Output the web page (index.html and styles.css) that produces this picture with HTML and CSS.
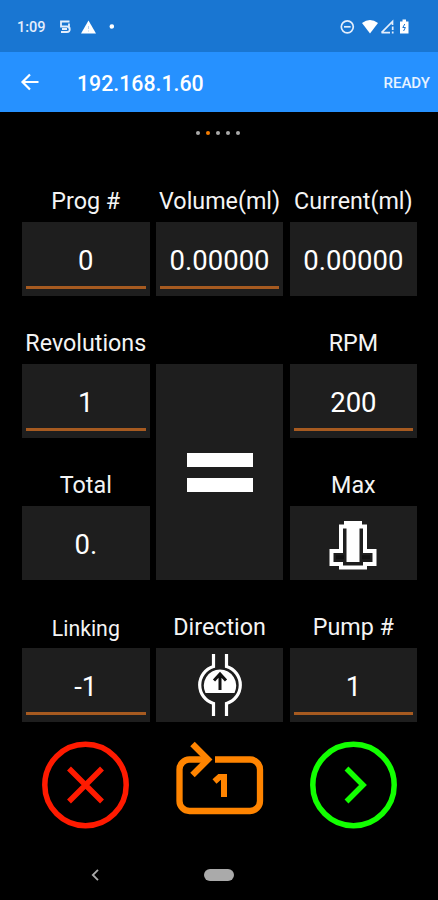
FILE: index.html
```html
<!DOCTYPE html>
<html lang="en">
<head>
  <meta charset="UTF-8" />
  <meta name="viewport" content="width=device-width, initial-scale=1.0"/>
  <title>Pump Control</title>
  <link rel="stylesheet" href="styles.css">
</head>
<body>
  <div class="status-bar">
    <span class="clock">1:09</span>
    <svg class="status-left" width="56" height="18" viewBox="0 0 56 18" fill="none" stroke="#e4eefc" stroke-width="1.8">
      <path d="M11.5 3.500H3V8.500H9a2.700 2.700 0 0 1 0 5.500H3M4 11h5M11 5.500v5"/>
      <path d="M30.500 2.500L38 15.500H23z" fill="#fff" stroke="none"/>
      <path d="M30.500 8v3M30.500 12.500v1" stroke="#b5d0ef" stroke-width="1"/>
      <circle cx="53.800" cy="8.500" r="2.300" fill="#fff" stroke="none"/>
    </svg>
    <svg class="status-right" width="72" height="18" viewBox="0 0 72 18" fill="none" stroke="#e4eefc" stroke-width="1.700">
      <circle cx="8.300" cy="8.800" r="6"/>
      <path d="M5 8.800h6.600"/>
      <path d="M23 5Q31 -1 39 5L31 15.500z" fill="#fff" stroke="none"/>
      <path d="M42.500 14.700L53.500 3.500v3.500M42.500 14.700h8.500M53.700 8.500v3.500M53.700 13.500v2"/>
      <path d="M61 3.500h2.500V1.500h3.500v2h2.500v12H61z" fill="#fff" stroke="none"/>
      <path d="M65.800 6l-2 3.500h2.600l-1.800 3.500" stroke="#1976d2" stroke-width="1"/>
    </svg>
  </div>

  <header>
    <svg width="20" height="18" viewBox="0 0 20 18" fill="none" stroke="#fff" stroke-width="2.200">
      <path d="M18.500 9H2.500M10 1.500L2.500 9l7.500 7.500"/>
    </svg>
    <h1>192.168.1.60</h1>
    <span class="ready">READY</span>
  </header>

  <div class="dots">
    <span></span><span class="active"></span><span></span><span></span><span></span>
  </div>

  <div class="panel">
    <div class="cell">
      <label>Prog #</label>
      <div class="tile input">0</div>
    </div>
    <div class="cell">
      <label>Volume(ml)</label>
      <div class="tile input">0.00000</div>
    </div>
    <div class="cell">
      <label>Current(ml)</label>
      <div class="tile">0.00000</div>
    </div>

    <div class="cell">
      <label>Revolutions</label>
      <div class="tile input">1</div>
    </div>
    <div class="cell equals">
      <div class="tile">
        <span class="bar"></span>
        <span class="bar"></span>
      </div>
    </div>
    <div class="cell">
      <label>RPM</label>
      <div class="tile input">200</div>
    </div>

    <div class="cell">
      <label>Total</label>
      <div class="tile">0.</div>
    </div>
    <div class="cell">
      <label>Max</label>
      <div class="tile">
        <!-- tubing size -->
        <svg width="50" height="52" viewBox="0 0 50 52">
          <path d="M13 8.500h5V5h14v3.500h5V33h9.500v13H37v3.500H13V46H3.500V33H13z" fill="none" stroke="#fff" stroke-width="4"/>
          <path d="M18.500 4h13v40h-13z" fill="#fff"/>
          <path d="M8 39.200h8M34 39.200h8" stroke="#111" stroke-width="4"/>
        </svg>
      </div>
    </div>

    <div class="cell">
      <label class="small">Linking</label>
      <div class="tile input">-1</div>
    </div>
    <div class="cell">
      <label>Direction</label>
      <div class="tile">
        <!-- pump head with flow arrow -->
        <svg width="44" height="64" viewBox="0 0 44 64" fill="none" stroke="#fff" stroke-width="3.200">
          <path d="M15.500 0v12.500A19.300 19.300 0 0 0 15.500 49.500v12.500M28.500 0v12.500A19.300 19.300 0 0 1 28.500 49.500v12.500"/>
          <path d="M7.500 39A16.200 16.200 0 1 1 36.500 39z" fill="#fff" stroke="none"/>
          <path d="M22 36V20.500M16 26.500l6-6.500 6 6.500" stroke="#111" stroke-width="3"/>
        </svg>
      </div>
    </div>
    <div class="cell">
      <label>Pump #</label>
      <div class="tile input">1</div>
    </div>
  </div>

  <div class="actions">
    <svg width="90" height="90" viewBox="0 0 90 90" fill="none" stroke="#ff1a00" stroke-width="5.500">
      <circle cx="45.500" cy="45" r="40.700"/>
      <path d="M29 28.500l33 33M62 28.500l-33 33"/>
    </svg>
    <svg width="90" height="90" viewBox="0 0 90 90" fill="none" stroke="#ff8400" stroke-width="6.300">
      <path d="M33 19.500H15.500A10 10 0 0 0 5.500 29.500V61A10 10 0 0 0 15.500 71H76A10 10 0 0 0 86 61V29.500A10 10 0 0 0 76 19.500H41"/>
      <path d="M18.500 4L34 19.500 18.500 35"/>
      <path d="M40.500 41.500L45.500 37H50v20" stroke-width="6"/>
    </svg>
    <svg width="90" height="90" viewBox="0 0 90 90" fill="none" stroke="#12ff00" stroke-width="5.500">
      <circle cx="45.500" cy="45" r="40.700"/>
      <path d="M38.500 28.500L55 45 38.500 61.500"/>
    </svg>
  </div>

  <div class="nav-bar">
    <svg width="8" height="12" viewBox="0 0 8 12" fill="none" stroke="#aaa" stroke-width="1.800">
      <path d="M7 .8L1.800 6 7 11.200"/>
    </svg>
    <span class="home"></span>
    <span></span>
  </div>
</body>
</html>
```

FILE: styles.css
```css
* {
  box-sizing: border-box;
}
body {
  background-color: #000;
  color: #fff;
  font-family: Roboto, Arial, sans-serif;
  margin: 0;
  height: 900px;
  overflow: hidden;
}
.status-bar {
  display: flex;
  align-items: center;
  height: 52px;
  padding: 2px 27px 0 17px;
  background-color: #1976d2;
}
.clock {
  width: 38px;
  font-size: 14.5px;
  font-weight: 500;
  color: #e4eefc;
}
.status-left {
  margin-left: 3px;
}
.status-right {
  margin-left: auto;
}
header {
  display: flex;
  align-items: center;
  height: 60px;
  padding: 0 8px 0 20px;
  background-color: #2691ff;
}
h1 {
  margin: 2px 0 0 37px;
  font-size: 21.3px;
  font-weight: 500;
}
.ready {
  margin-left: auto;
  margin-top: 1px;
  font-size: 15px;
  font-weight: 500;
  color: #e8f3ff;
}
.dots {
  display: flex;
  justify-content: center;
  gap: 6px;
  height: 42px;
  padding: 19px 2px 0 0;
}
.dots span {
  width: 4px;
  height: 4px;
  border-radius: 50%;
  background-color: #aaa;
}
.dots .active {
  background-color: #f57c00;
}
.panel {
  display: grid;
  grid-template-columns: repeat(3, 127.6px);
  grid-auto-rows: 142px;
  column-gap: 6.2px;
  padding-left: 22px;
}
.cell {
  display: flex;
  flex-direction: column;
  justify-content: flex-end;
}
label {
  height: 35px;
  line-height: 29px;
  margin: 0 -4px;
  font-size: 23.3px;
  text-align: center;
  white-space: nowrap;
  color: #f4f4f4;
}
label.small {
  font-size: 21.3px;
  line-height: 31px;
}
.tile {
  display: flex;
  align-items: center;
  justify-content: center;
  height: 74px;
  padding-top: 2px;
  font-size: 27.5px;
  background-color: #1e1e1e;
  position: relative;
}
.input::after {
  content: "";
  position: absolute;
  left: 4px;
  right: 4px;
  bottom: 7px;
  height: 3px;
  background-color: #a65a20;
}
.equals {
  grid-row: span 2;
}
.equals .tile {
  flex-direction: column;
  gap: 11px;
  height: 216px;
  padding-top: 0;
}
.bar {
  width: 66px;
  height: 14px;
  background-color: #fff;
}
.actions {
  display: flex;
  justify-content: space-between;
  height: 128px;
  padding: 18px 40px 0;
}
.nav-bar {
  display: grid;
  grid-template-columns: 8px 30px 8px;
  justify-content: space-between;
  align-items: center;
  height: 50px;
  padding: 0 91px;
}
.home {
  height: 12px;
  border-radius: 6px;
  background-color: #aaa;
}
```
